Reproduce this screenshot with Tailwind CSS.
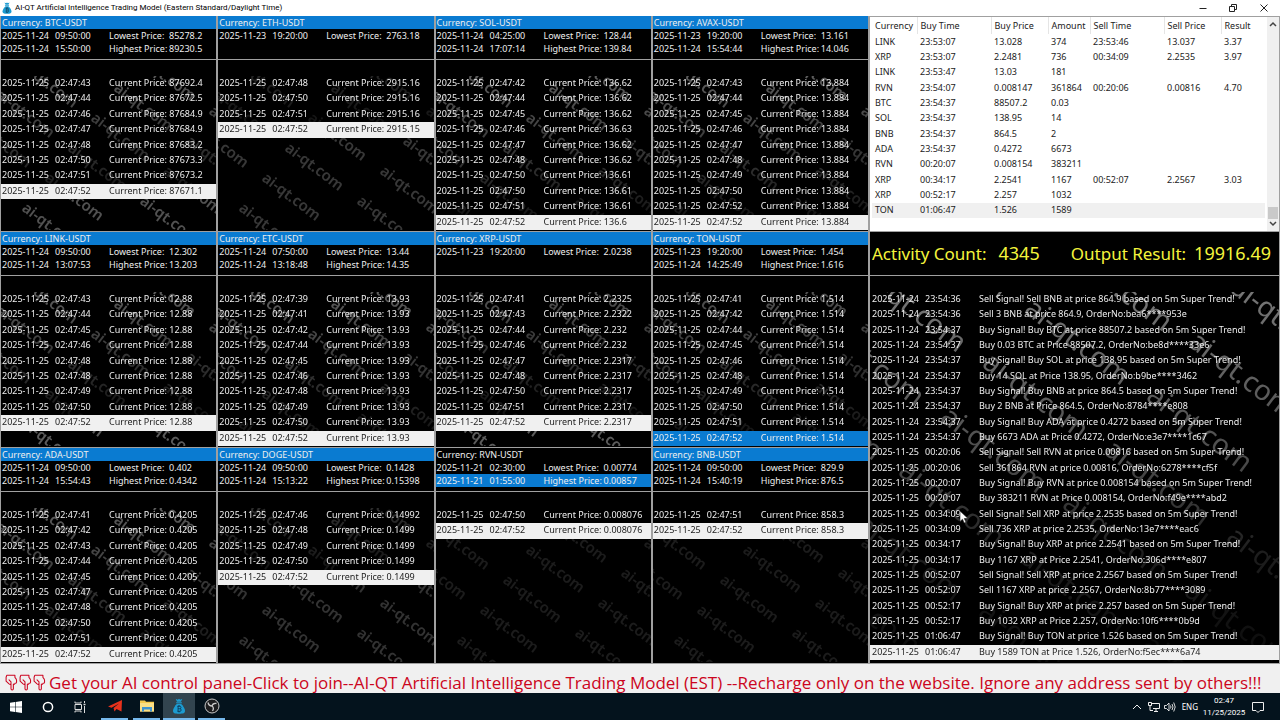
<!doctype html>
<html lang="en">
  <head>
    <meta charset="UTF-8" />
    <meta name="viewport" content="width=device-width, initial-scale=1.0" />
    <script src="https://cdn.jsdelivr.net/npm/@tailwindcss/browser@4"></script>
    <title>AI-QT Artificial Intelligence Trading Model</title>
  </head>
  <body
    class="flex min-h-screen flex-col overflow-hidden bg-[#f0f0f0] font-['Noto_Sans','Open_Sans',sans-serif] text-[9px] text-black"
  >
    <!-- Shared icons -->
    <svg class="hidden">
      <symbol id="bag" viewBox="0 0 20 24">
        <path d="M5 1l3 1.500 2-1.500 2 1.500 3-1.500-2 4.500H7z" fill="#1c9bd1" />
        <rect x="5.500" y="6.300" width="9" height="1.600" rx="0.800" fill="#1c9bd1" />
        <path d="M7 8.500h6c3 3 6 7 6 10.500S16.500 23.500 10 23.500 1 22.500 1 19 4 11.500 7 8.500z" fill="#1c9bd1" />
        <path
          d="M7.500 12.500h3.700a1.800 1.800 0 010 3.600H8.500m2.900 0a1.900 1.900 0 010 3.800H7.500M8.600 12.500v7.400M9.400 11v1.500M11 11v1.500M9.400 20v1.400M11 20v1.400"
          fill="none"
          stroke="#0b3550"
          stroke-width="1.200"
        />
      </symbol>
      <symbol id="finger" viewBox="0 0 20 26">
        <path
          d="M10 15v7.500c0 2.500 3.600 2.500 3.600 0V15.500c1.500.5 2.500 0 2.500-1.200 1.400 0 2.400-.6 2.400-1.800V9.500c0-1.500-1-3-2.500-4.500V2H3.500L2.500 5v6l4.500 4c1.500 1.200 3 1.200 3 0zM10 15v-3L7 9"
          fill="none"
          stroke="#cc0520"
          stroke-width="1.600"
          stroke-linejoin="round"
          stroke-linecap="round"
        />
      </symbol>
    </svg>

    <!-- Title bar -->
    <header class="flex h-4 items-center bg-white pl-0.5">
      <svg class="h-3 w-2.5"><use href="#bag" /></svg>
      <h1 class="pl-[3px] font-[Roboto,sans-serif] text-[8px] leading-4">
        AI-QT Artificial Intelligence Trading Model (Eastern Standard/Daylight Time)
      </h1>
      <div class="ml-auto flex h-3.5 text-[#222]">
        <button class="flex w-[30px] items-center justify-center" aria-label="Minimize">
          <svg class="size-2" viewBox="0 0 8 8"><path d="M0.500 4.500h7" stroke="currentColor" /></svg>
        </button>
        <button class="flex w-[30px] items-center justify-center" aria-label="Restore">
          <svg class="size-2" viewBox="0 0 8 8" fill="none" stroke="currentColor">
            <path d="M0.500 2.500h5v5h-5zM2.500 2V0.500h5v5H6" />
          </svg>
        </button>
        <button class="flex w-[32px] items-center justify-center" aria-label="Close">
          <svg class="size-2" viewBox="0 0 8 8"><path d="M0.500 0.500l7 7m0-7l-7 7" stroke="currentColor" /></svg>
        </button>
      </div>
    </header>

    <main class="grid grid-cols-[869fr_411fr]">
      <!-- Price panels -->
      <section id="panels" class="grid grid-cols-4"></section>

      <section class="flex flex-col border-x border-[#a0a0a0]">
        <!-- Trades -->
        <div class="flex h-[216px] border-y border-[#a0a0a0] bg-white text-[#222]">
          <table class="ml-0.5 h-[201px] flex-1 table-fixed border-collapse text-left">
            <colgroup>
              <col class="w-[45px]" />
              <col class="w-[74px]" />
              <col class="w-[57px]" />
              <col class="w-[42px]" />
              <col class="w-[74px]" />
              <col class="w-[57px]" />
              <col />
            </colgroup>
            <thead>
              <tr id="trade-head" class="h-[17px]"></tr>
            </thead>
            <tbody id="trades"></tbody>
          </table>
          <div class="ml-0.5 flex w-3 flex-col items-center justify-between bg-[#f0f0f0] py-1">
            <svg class="h-1.5 w-2" viewBox="0 0 8 6"><path d="M1 5l3-3 3 3" fill="none" stroke="#444" stroke-width="1.500" /></svg>
            <div class="mt-auto mb-0.5 h-3 w-2.5 bg-[#c9c9c9]"></div>
            <svg class="h-1.5 w-2" viewBox="0 0 8 6"><path d="M1 1l3 3 3-3" fill="none" stroke="#444" stroke-width="1.500" /></svg>
          </div>
        </div>

        <!-- Totals -->
        <div class="flex h-[43px] items-center justify-between bg-black pr-2 pb-0.5 pl-0.5 text-[17px] text-[#f4f43c]">
          <p class="flex items-baseline gap-3"><span>Activity Count:</span><span class="text-lg">4345</span></p>
          <p class="flex items-baseline gap-2"><span>Output Result:</span><span class="text-lg">19916.49</span></p>
        </div>

        <!-- Order log -->
        <div class="relative flex-1 border-y border-[#a0a0a0] bg-black pt-4 text-[#eee]">
          <svg class="absolute inset-x-0 top-4 h-[370px] w-full overflow-hidden">
            <defs>
              <linearGradient id="log-fade" x2="0" y2="1">
                <stop offset="0" stop-color="#fff" stop-opacity="0.460" />
                <stop offset="0.450" stop-color="#fff" stop-opacity="0.300" />
                <stop offset="0.700" stop-color="#fff" stop-opacity="0.120" />
                <stop offset="1" stop-color="#fff" stop-opacity="0.040" />
              </linearGradient>
              <mask id="log-mask"><rect width="100%" height="100%" fill="url(#log-fade)" /></mask>
            </defs>
            <g id="log-mark" mask="url(#log-mask)" fill="#fff" font-size="28"></g>
          </svg>
          <ul id="log" class="relative grid h-[368px] auto-rows-fr"></ul>
        </div>
      </section>
    </main>

    <!-- Notice -->
    <div
      class="flex h-[29px] items-center pt-2 pl-1 font-['Open_Sans',sans-serif] text-[17px] leading-5 whitespace-nowrap text-[#cc0520]"
    >
      <svg class="h-[17px] w-[14px] shrink-0"><use href="#finger" /></svg>
      <svg class="h-[17px] w-[14px] shrink-0"><use href="#finger" /></svg>
      <svg class="h-[17px] w-[14px] shrink-0"><use href="#finger" /></svg>
      <a href="#" class="pl-[3px]"
        >Get your AI control panel-Click to join--AI-QT Artificial Intelligence Trading Model (EST) --Recharge only on
        the website. Ignore any address sent by others!!!</a
      >
    </div>

    <!-- Taskbar -->
    <footer class="flex h-[27px] items-stretch bg-[#04131d] text-white">
      <button class="flex w-8 items-center justify-center" aria-label="Start">
        <svg class="size-3" viewBox="0 0 12 12" fill="#fff">
          <path d="M0 1.700l5-.7v4.700H0zM5.600.9L12 0v5.700H5.600zM0 6.300h5V11l-5-.7zM5.600 6.300H12V12l-6.400-.9z" />
        </svg>
      </button>
      <button class="flex w-8 items-center justify-center" aria-label="Search">
        <svg class="size-3" viewBox="0 0 12 12"><circle cx="6" cy="6" r="4.600" fill="none" stroke="#fff" stroke-width="1.500" /></svg>
      </button>
      <button class="flex w-8 items-center justify-center" aria-label="Task view">
        <svg class="size-3" viewBox="0 0 12 12" fill="none" stroke="#ddd">
          <path d="M1 0.500v1.500h6V0.500M1 3.500h6.500v5H1zM1 11.500V10h6v1.500M10.500 0v2M10.500 5v7" />
          <path d="M9.500 3.500h2" stroke-width="1.500" />
        </svg>
      </button>
      <button class="flex w-[37px] items-center justify-center" aria-label="Telegram">
        <span class="flex h-full w-[27px] items-center justify-center border-b-2 border-[#76b9ed]">
          <svg class="size-3.5" viewBox="0 0 14 14"><path d="M0 7.500L14 1l-.5 11.500-5-2.500-2 2.500-1-3.500L11 4.500 3.500 8.800z" fill="#e8321c" /></svg>
        </span>
      </button>
      <button class="flex w-[27px] items-center justify-center border-b-2 border-[#76b9ed]" aria-label="File Explorer">
        <svg class="h-3 w-3.5" viewBox="0 0 14 12">
          <path d="M0 0.500h5l1 1.300h8V11.500H0z" fill="#f5c84c" />
          <path d="M0 3h14v8.500H0z" fill="#fbdf85" />
          <path d="M2 11.500V7h10v4.500H10V9.500H4v2z" fill="#3f93cf" />
        </svg>
      </button>
      <button class="ml-[3px] flex w-8 items-center justify-center border-b-2 border-[#76b9ed] bg-[#32444f]" aria-label="AI-QT">
        <svg class="h-4 w-3.5"><use href="#bag" /></svg>
      </button>
      <button class="ml-[3px] flex w-[27px] items-center justify-center border-b-2 border-[#76b9ed]" aria-label="OBS Studio">
        <svg class="size-4" viewBox="0 0 16 16" fill="none" stroke="#c9c9c9">
          <circle cx="8" cy="8" r="7" fill="#1d1d1f" />
          <path d="M4 4.500c.5 2.500 2.200 3.500 4 3.500M12.500 5.500C10.500 5 8.500 6 8 8M8.500 13c1.300-2 1-3.800-.5-5" stroke-width="1.300" />
        </svg>
      </button>

      <div class="ml-auto flex items-center text-[8px]">
        <svg class="h-2 w-2.5" viewBox="0 0 10 8"><path d="M1 6l4-4 4 4" fill="none" stroke="#eee" /></svg>
        <svg class="ml-1.5 h-3 w-3" viewBox="0 0 12 12" fill="none" stroke="#eee">
          <path d="M4 2.500h7.500v5H5M0.500 1.500h3v3h-3zM2 4.500v5h3M6 10.500h4M8 7.500v3" />
        </svg>
        <svg class="ml-1 h-3 w-3" viewBox="0 0 12 12" fill="none" stroke="#eee">
          <path d="M0.500 4.500h2L5 2v8L2.500 7.500h-2zM6.500 4.500q1 1.500 0 3M8 3q2 3 0 6M9.700 1.500q3 4.500 0 9" stroke-width="0.900" />
        </svg>
        <span class="ml-1.5">ENG</span>
        <time class="ml-1.5 flex w-10 flex-col items-center font-[Roboto,sans-serif] leading-3"
          ><span>02:47</span><span>11/25/2025</span></time
        >
        <svg class="mr-4 ml-2 size-3" viewBox="0 0 12 12" fill="none" stroke="#eee">
          <path d="M0.500 1.500h11v8H8l-2 2-2-2H0.500z" />
        </svg>
      </div>
    </footer>

    <!-- Pointer -->
    <svg class="absolute top-[510px] left-[959px] h-3.5 w-2.5" viewBox="0 0 10 14">
      <path d="M1 1v10.500l2.500-2.300L5.200 13l1.800-.8-1.700-3.700H9z" fill="#fff" stroke="#222" stroke-width="0.600" />
    </svg>

    <script>
      const H = "2025-11-";
      // mark: [opacity at top, opacity at last row, opacity below the list]
      const panels = [
        { name: "BTC", low: ["24 09:50:00", "85278.2"], high: ["24 15:50:00", "89230.5"], mark: [0.34, 0.08, 0.32],
          rows: ["43 87692.4", "44 87672.5", "46 87684.9", "47 87684.9", "48 87683.2", "50 87673.3", "51 87673.2", "52 87671.1"] },
        { name: "ETH", low: ["23 19:20:00", "2763.18"], mark: [0.14, 0.06, 0.22],
          rows: ["48 2915.16", "50 2915.16", "51 2915.16", "52 2915.15"] },
        { name: "SOL", low: ["24 04:25:00", "128.44"], high: ["24 17:07:14", "139.84"], mark: [0.36, 0.06, 0],
          rows: ["42 136.62", "44 136.62", "45 136.62", "46 136.63", "47 136.62", "48 136.62", "50 136.61", "50 136.61", "51 136.61", "52 136.6"] },
        { name: "AVAX", low: ["23 19:20:00", "13.161"], high: ["24 15:54:44", "14.046"], mark: [0.36, 0.06, 0],
          rows: ["43 13.884", "44 13.884", "45 13.884", "46 13.884", "47 13.884", "48 13.884", "49 13.884", "50 13.884", "52 13.884", "52 13.884"] },
        { name: "LINK", low: ["24 09:50:00", "12.302"], high: ["24 13:07:53", "13.203"], mark: [0.36, 0.04, 0.36],
          rows: ["43 12.88", "44 12.88", "45 12.88", "46 12.88", "48 12.88", "48 12.88", "49 12.88", "50 12.88", "52 12.88"] },
        { name: "ETC", low: ["24 07:50:00", "13.44"], high: ["24 13:18:48", "14.35"], mark: [0.36, 0.06, 0],
          rows: ["39 13.93", "41 13.93", "42 13.93", "44 13.93", "45 13.93", "46 13.93", "48 13.93", "49 13.93", "50 13.93", "52 13.93"] },
        { name: "XRP", low: ["23 19:20:00", "2.0238"], mark: [0.32, 0.04, 0.36],
          rows: ["41 2.2325", "43 2.2322", "44 2.232", "46 2.232", "47 2.2317", "48 2.2317", "50 2.2317", "51 2.2317", "52 2.2317"] },
        { name: "TON", low: ["23 19:20:00", "1.454"], high: ["24 14:25:49", "1.616"], mark: [0.32, 0.06, 0], active: true,
          rows: ["41 1.514", "42 1.514", "44 1.514", "45 1.514", "46 1.514", "48 1.514", "49 1.514", "50 1.514", "51 1.514", "52 1.514"] },
        { name: "ADA", low: ["24 09:50:00", "0.402"], high: ["24 15:54:43", "0.4342"], mark: [0.36, 0.06, 0],
          rows: ["41 0.4205", "42 0.4205", "43 0.4205", "44 0.4205", "45 0.4205", "47 0.4205", "48 0.4205", "50 0.4205", "51 0.4205", "52 0.4205"] },
        { name: "DOGE", low: ["24 09:50:00", "0.1428"], high: ["24 15:13:22", "0.15398"], mark: [0.18, 0.06, 0.2],
          rows: ["46 0.14992", "48 0.1499", "49 0.1499", "50 0.1499", "52 0.1499"] },
        { name: "RVN", low: ["21 02:30:00", "0.00774"], high: ["21 01:55:00", "0.00857"], mark: [0, 0, 0.11], picked: true,
          rows: ["50 0.008076", "52 0.008076"] },
        { name: "BNB", low: ["24 09:50:00", "829.9"], high: ["24 15:40:19", "876.5"], mark: [0, 0, 0.11],
          rows: ["51 858.3", "52 858.3"] },
      ];

      // Diagonal "ai-qt.com" tiling: area and text size, origin, step down-left, step right
      const tile = (w, h, size, x0, y0, dx, dy, bx, by) => {
        let out = "";
        for (let col = -1; col <= 2; col++) {
          for (let i = -4; i <= 8; i++) {
            const x = x0 + col * bx - i * dx;
            const y = y0 + col * by + i * dy;
            const seen = x < w - size / 2 && y < h && x > -size * 3.4 && y > -size * 2.5;
            if (seen) out += `<text transform="translate(${x} ${y}) rotate(37)">ai-qt.com</text>`;
          }
        }
        return out;
      };

      const stamp = (s) => {
        const [day, time] = s.split(" ");
        return `<time class="flex w-[107px]"><span class="w-[53px]">${H}${day}</span><span>${time}</span></time>`;
      };

      const edge = (label, item, cls) =>
        `<li class="flex h-[13px] pl-px leading-[14px] ${cls}">${
          item ? `${stamp(item[0])}<span class="w-[60px]">${label} Price:</span><span>${item[1]}</span>` : ""
        }</li>`;

      document.getElementById("panels").innerHTML = panels
        .map((p, n) => {
          const cut = p.rows.length * 10;
          const rows = p.rows
            .map((r, i) => {
              const [sec, price] = r.split(" ");
              const last = i === p.rows.length - 1;
              const cls = last ? (p.active ? "bg-[#0a7bd1]" : "bg-[#f0f0f0] text-[#222]") : "";
              return `<li class="flex pl-px leading-[14px] ${cls}">${stamp("25 02:47:" + sec)}<span>Current Price: ${price}</span></li>`;
            })
            .join("");
          return `
          <article class="border-x border-b border-[#a0a0a0] bg-black text-[#eee]">
            <ul class="border-b border-[#a0a0a0] pb-1">
              <li class="h-[13px] pl-px leading-[14px] ${p.picked ? "" : "bg-[#0a7bd1]"}">Currency: ${p.name}-USDT</li>
              ${edge("Lowest", p.low, "")}
              ${edge("Highest", p.high, p.picked ? "bg-[#0a7bd1]" : "")}
            </ul>
            <div class="relative pt-4 pb-px">
              <svg class="absolute inset-x-0 top-4 h-[154px] w-full overflow-hidden">
                <linearGradient id="fade${n}" x2="0" y2="1">
                  <stop offset="0" stop-color="#fff" stop-opacity="${p.mark[0]}" />
                  <stop offset="${cut}%" stop-color="#fff" stop-opacity="${p.mark[1]}" />
                  <stop offset="${cut}%" stop-color="#fff" stop-opacity="${p.mark[2]}" />
                </linearGradient>
                <mask id="mask${n}" maskUnits="userSpaceOnUse" x="0" y="0" width="240" height="154">
                  <rect width="240" height="154" fill="url(#fade${n})" />
                </mask>
                <g mask="url(#mask${n})" fill="#fff" font-size="15" font-weight="600">
                  ${tile(215, p.rows.length === 10 ? 138 : 154, 15, 112, 14, 23, 30, 95, 23)}
                </g>
              </svg>
              <ul class="relative grid h-[154px] grid-rows-10">${rows}</ul>
            </div>
          </article>`;
        })
        .join("");

      const heads = ["Currency", "Buy Time", "Buy Price", "Amount", "Sell Time", "Sell Price", "Result"];
      const trades = [
        ["LINK", "23:53:07", "13.028", "374", "23:53:46", "13.037", "3.37"],
        ["XRP", "23:53:07", "2.2481", "736", "00:34:09", "2.2535", "3.97"],
        ["LINK", "23:53:47", "13.03", "181", "", "", ""],
        ["RVN", "23:54:07", "0.008147", "361864", "00:20:06", "0.00816", "4.70"],
        ["BTC", "23:54:37", "88507.2", "0.03", "", "", ""],
        ["SOL", "23:54:37", "138.95", "14", "", "", ""],
        ["BNB", "23:54:37", "864.5", "2", "", "", ""],
        ["ADA", "23:54:37", "0.4272", "6673", "", "", ""],
        ["RVN", "00:20:07", "0.008154", "383211", "", "", ""],
        ["XRP", "00:34:17", "2.2541", "1167", "00:52:07", "2.2567", "3.03"],
        ["XRP", "00:52:17", "2.257", "1032", "", "", ""],
        ["TON", "01:06:47", "1.526", "1589", "", "", ""],
      ];
      document.getElementById("trade-head").innerHTML = heads
        .map((h) => `<th class="border-r border-[#e5e5e5] p-0 pl-[3px] font-normal last:border-r-0">${h}</th>`)
        .join("");
      document.getElementById("trades").innerHTML = trades
        .map((t) => `<tr class="last:bg-[#f0f0f0]">${t.map((c) => `<td class="p-0 pl-[3px] leading-3">${c}</td>`).join("")}</tr>`)
        .join("");

      const log = [
        ["24 23:54:36", "Sell Signal! Sell BNB at price 864.9 based on 5m Super Trend!"],
        ["24 23:54:36", "Sell 3 BNB at price 864.9, OrderNo:bea6****953e"],
        ["24 23:54:37", "Buy Signal! Buy BTC at price 88507.2 based on 5m Super Trend!"],
        ["24 23:54:37", "Buy 0.03 BTC at Price 88507.2, OrderNo:be8d****33e6"],
        ["24 23:54:37", "Buy Signal! Buy SOL at price 138.95 based on 5m Super Trend!"],
        ["24 23:54:37", "Buy 14 SOL at Price 138.95, OrderNo:b9be****3462"],
        ["24 23:54:37", "Buy Signal! Buy BNB at price 864.5 based on 5m Super Trend!"],
        ["24 23:54:37", "Buy 2 BNB at Price 864.5, OrderNo:8784****e808"],
        ["24 23:54:37", "Buy Signal! Buy ADA at price 0.4272 based on 5m Super Trend!"],
        ["24 23:54:37", "Buy 6673 ADA at Price 0.4272, OrderNo:e3e7****1c67"],
        ["25 00:20:06", "Sell Signal! Sell RVN at price 0.00816 based on 5m Super Trend!"],
        ["25 00:20:06", "Sell 361864 RVN at price 0.00816, OrderNo:6278****cf5f"],
        ["25 00:20:07", "Buy Signal! Buy RVN at price 0.008154 based on 5m Super Trend!"],
        ["25 00:20:07", "Buy 383211 RVN at Price 0.008154, OrderNo:f49e****abd2"],
        ["25 00:34:09", "Sell Signal! Sell XRP at price 2.2535 based on 5m Super Trend!"],
        ["25 00:34:09", "Sell 736 XRP at price 2.2535, OrderNo:13e7****eac6"],
        ["25 00:34:17", "Buy Signal! Buy XRP at price 2.2541 based on 5m Super Trend!"],
        ["25 00:34:17", "Buy 1167 XRP at Price 2.2541, OrderNo:306d****e807"],
        ["25 00:52:07", "Sell Signal! Sell XRP at price 2.2567 based on 5m Super Trend!"],
        ["25 00:52:07", "Sell 1167 XRP at price 2.2567, OrderNo:8b77****3089"],
        ["25 00:52:17", "Buy Signal! Buy XRP at price 2.257 based on 5m Super Trend!"],
        ["25 00:52:17", "Buy 1032 XRP at Price 2.257, OrderNo:10f6****0b9d"],
        ["25 01:06:47", "Buy Signal! Buy TON at price 1.526 based on 5m Super Trend!"],
        ["25 01:06:47", "Buy 1589 TON at Price 1.526, OrderNo:f5ec****6a74"],
      ];
      document.getElementById("log").innerHTML = log
        .map((l) => `<li class="flex pl-0.5 leading-[14px] last:bg-[#f0f0f0] last:text-[#222]">${stamp(l[0])}<span>${l[1]}</span></li>`)
        .join("");
      document.getElementById("log-mark").innerHTML = tile(409, 370, 28, 153, 20, 42, 54, 164, 33);
    </script>
  </body>
</html>
